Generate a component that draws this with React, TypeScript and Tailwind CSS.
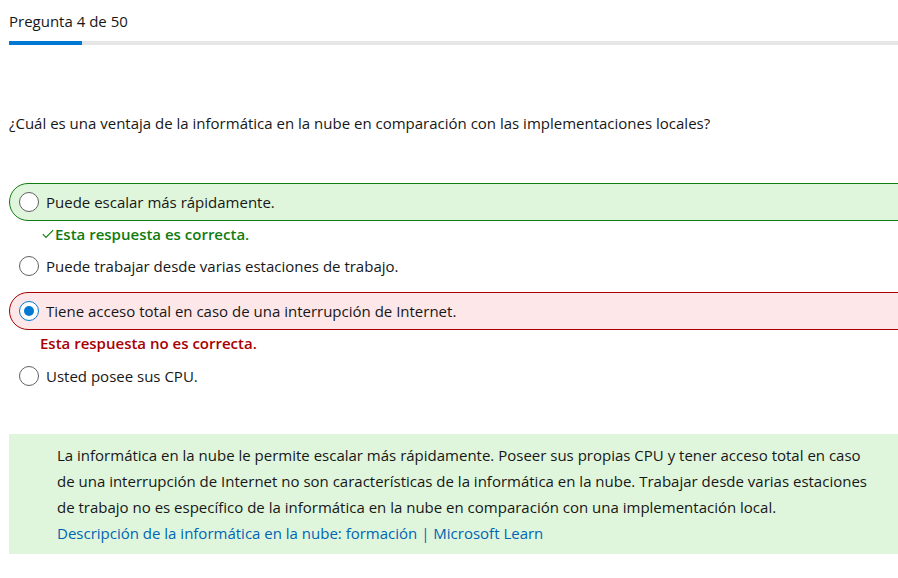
import React from "react";

type Opt = {
  label: string;
  state?: "correct" | "wrong";
  checked?: boolean;
};

const options: Opt[] = [
  { label: "Puede escalar más rápidamente.", state: "correct" },
  { label: "Puede trabajar desde varias estaciones de trabajo." },
  { label: "Tiene acceso total en caso de una interrupción de Internet.", state: "wrong", checked: true },
  { label: "Usted posee sus CPU." },
];

function Radio({ checked }: { checked?: boolean }) {
  if (checked) {
    return (
      <span className="flex h-[20px] w-[20px] shrink-0 items-center justify-center rounded-full border-[1.5px] border-[#0078d4] bg-white">
        <span className="h-[10px] w-[10px] rounded-full bg-[#0078d4]" />
      </span>
    );
  }
  return <span className="h-[20px] w-[20px] shrink-0 rounded-full border border-[#616161] bg-white" />;
}

function Option({ label, state, checked }: Opt) {
  const box =
    state === "correct"
      ? "border border-[#107c10] bg-[#dff6dd]"
      : state === "wrong"
        ? "border border-[#a80000] bg-[#fde7e9]"
        : "border border-transparent";
  return (
    <div>
      <div className={`mr-[-20px] flex h-[38px] items-center gap-[7px] rounded-l-[19px] pl-[9px] ${box}`}>
        <Radio checked={checked} />
        <span className="text-[15px] text-[#171717]">{label}</span>
      </div>
      {state === "correct" && (
        <p className="flex h-[26px] items-center pl-[33px] text-[15px] font-semibold text-[#107c10]">
          <svg width="12" height="10" viewBox="0 0 12 10" className="mr-[1px]" fill="none">
            <path d="M0.8 5.2 L4 8.4 L11.2 1.2" stroke="#107c10" strokeWidth="1.1" />
          </svg>
          Esta respuesta es correcta.
        </p>
      )}
      {state === "wrong" && (
        <p className="flex h-[27px] items-center pl-[31px] text-[15px] font-semibold text-[#a80000]">
          Esta respuesta no es correcta.
        </p>
      )}
    </div>
  );
}

export default function App() {
  return (
    <div className="h-[578px] w-[898px] overflow-hidden bg-white pl-[9px] font-['Segoe_UI','Open_Sans',sans-serif] text-[#171717]">
      <div className="pt-[11px] text-[15px] leading-[20px]">Pregunta 4 de 50</div>
      <div className="mt-[10px] flex h-[4px] bg-[#e6e6e6]">
        <div className="w-[73px] bg-[#0078d4]" />
      </div>

      <p className="mt-[68px] text-[15px] leading-[20px]">
        ¿Cuál es una ventaja de la informática en la nube en comparación con las implementaciones locales?
      </p>

      <div className="mt-[50px] flex flex-col">
        <Option {...options[0]} />
        <Option {...options[1]} />
        <div className="h-[7px]" />
        <Option {...options[2]} />
        <Option {...options[3]} />
      </div>

      <div className="mt-[39px] bg-[#dff6dd] py-[8px] pl-[48px] pr-[20px] text-[15px] leading-[26px]">
        <p>
          La informática en la nube le permite escalar más rápidamente. Poseer sus propias CPU y tener acceso total en
          caso de una interrupción de Internet no son características de la informática en la nube. Trabajar desde
          varias estaciones de trabajo no es específico de la informática en la nube en comparación con una
          implementación local.
        </p>
        <a href="#" className="text-[#0065b3]">
          Descripción de la informática en la nube: formación | Microsoft Learn
        </a>
      </div>
    </div>
  );
}
